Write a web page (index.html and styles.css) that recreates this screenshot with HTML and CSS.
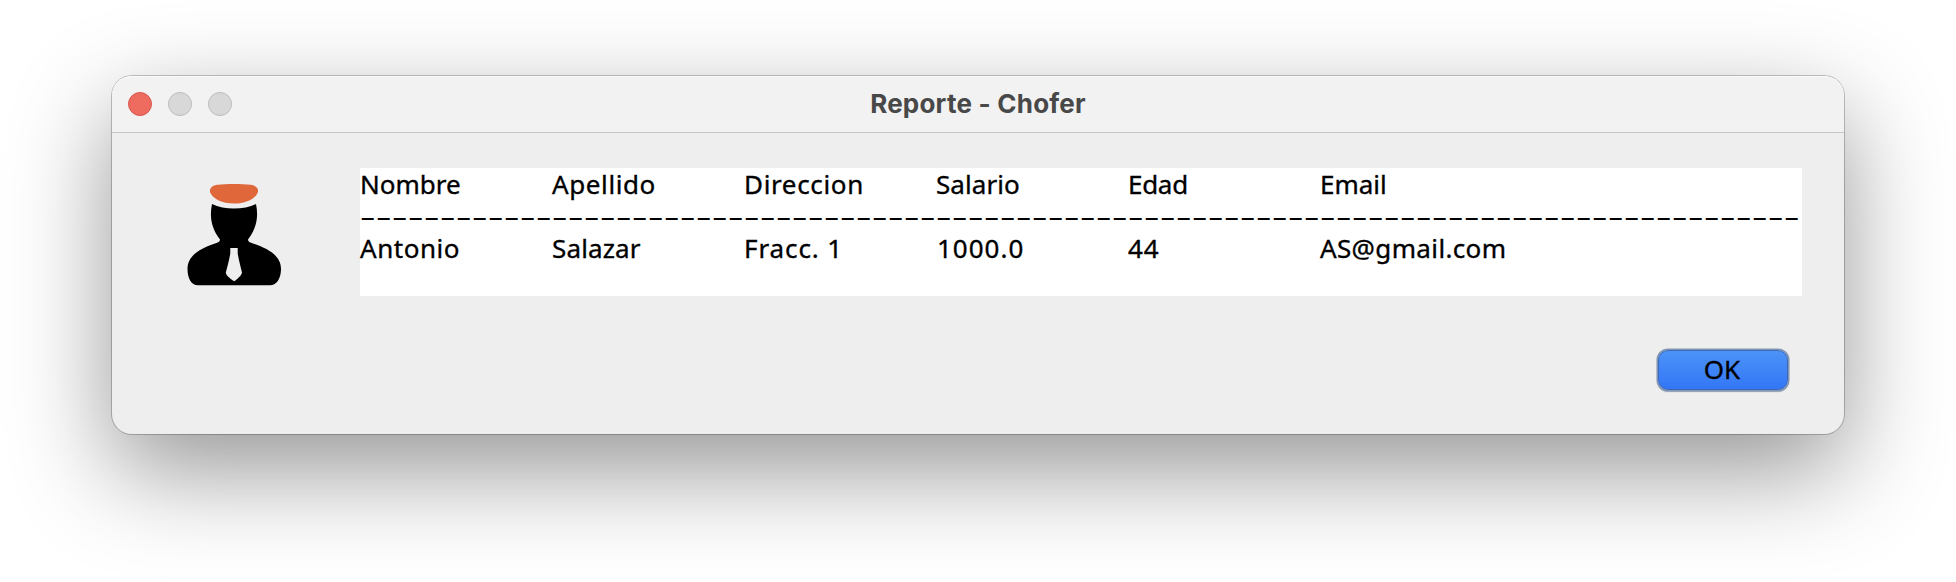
FILE: index.html
```
<!DOCTYPE html>
<html lang="es">
<head>
<meta charset="utf-8">
<title>Reporte - Chofer</title>
<link rel="stylesheet" href="styles.css">
</head>
<body>
<main class="window">
  <header class="titlebar">
    <div class="lights"><i class="light close"></i><i class="light"></i><i class="light"></i></div>
    <h1 class="title">Reporte - Chofer</h1>
  </header>
  <section class="content">
    <svg class="driver" width="96" height="104" viewBox="0 0 96 104">
      <path fill="#e0673a" d="M31.5 .8C40 -.2 56 -.2 64.5 .8C70 1.500 73 4.500 71.8 8.500C69 15 60 19.500 48 19.500S27 15 24.2 8.500C23 4.500 26 1.500 31.5 .8Z"/>
      <path fill="#000" d="M26 20C38 26 58 26 70 20C72.5 32 71 44 62 55.5C62 58 64 58.5 67 59.5C83 65 95 72 95 85C95 94 91 101.300 84 101.300H12C5 101.300 1.500 94 1.500 85C1.500 72 13 65 29 59.500C32 58.500 34 58 34 55.500C25 44 23.500 32 26 20Z"/>
      <path fill="#eee" d="M44.300 64H51.700V69.500Q53 77 56 88.500C55.500 92 51 95 48.300 97.300C45 95 40 92 39.800 88.500Q43 77 44.300 69.500Z"/>
    </svg>
    <div class="report">
      <div class="row"><span class="nombre">Nombre</span><span class="apellido">Apellido</span><span class="direccion">Direccion</span><span class="salario">Salario</span><span class="edad">Edad</span><span class="email">Email</span></div>
      <div class="rule">------------------------------------------------------------------------------------------</div>
      <div class="row"><span class="v-nombre">Antonio</span><span class="v-apellido">Salazar</span><span class="v-direccion">Fracc. 1</span><span class="v-salario">1000.0</span><span class="v-edad">44</span><span class="v-email">AS@gmail.com</span></div>
    </div>
  </section>
  <footer class="actions"><button class="ok">OK</button></footer>
</main>
</body>
</html>
```
FILE: styles.css
```
* { box-sizing: border-box; }
body {
  margin: 0;
  height: 582px;
  padding: 76px 112px 0;
  background: #fff;
  overflow: hidden;
  font: 26px/32px "Noto Sans", sans-serif;
  color: #000;
}
.window {
  height: 358px;
  border-radius: 20px;
  background: #eee;
  box-shadow: 0 0 0 1px rgba(0, 0, 0, .22), 0 36px 100px rgba(0, 0, 0, .42);
}
.titlebar {
  height: 57px;
  display: grid;
  grid-template-columns: 1fr auto 1fr;
  align-items: center;
  padding: 0 16px;
  background: #f2f2f2;
  border-bottom: 1px solid #c6c6c6;
  border-radius: 20px 20px 0 0;
  box-shadow: inset 0 1px #fafafa;
}
.lights { display: flex; gap: 16px; }
.light {
  width: 24px;
  height: 24px;
  border-radius: 50%;
  background: #d8d8d8;
  border: 1px solid #bcbcbc;
}
.close { background: #ed6b5f; border-color: #d9574d; }
.title {
  margin: 0;
  font: 700 26px/32px Inter, sans-serif;
  letter-spacing: .22px;
  color: #484848;
  white-space: nowrap;
}
.content {
  display: flex;
  justify-content: space-between;
  padding: 35px 42px 0 74px;
}
.driver { margin-top: 16px; overflow: visible; }
.report {
  width: 1442px;
  height: 128px;
  background: #fff;
}
.row {
  display: grid;
  grid-template-columns: repeat(5, 192px) 1fr;
  height: 32px;
  white-space: nowrap;
  -webkit-text-stroke: .35px #000;
}
.apellido { letter-spacing: .6px; }
.direccion { letter-spacing: .65px; }
.salario { letter-spacing: .08px; }
.edad { letter-spacing: -.3px; }
.v-nombre { letter-spacing: .55px; }
.v-apellido { letter-spacing: .15px; }
.v-direccion { letter-spacing: .9px; }
.v-salario { letter-spacing: 1px; padding-left: 1px; }
.v-edad { letter-spacing: .8px; }
.v-email { letter-spacing: .36px; }
.rule {
  height: 32px;
  width: 779px;
  white-space: nowrap;
  letter-spacing: .277px;
  transform: scaleX(1.85);
  transform-origin: 0 0;
  -webkit-text-stroke: .15px #000;
}
.actions {
  display: flex;
  justify-content: flex-end;
  padding: 54px 56px 0;
}
.ok {
  width: 130px;
  height: 40px;
  padding: 0 2px 2px 0;
  border: 1px solid #3c68b5;
  border-radius: 10px;
  background: linear-gradient(#4c93f7, #3376f6);
  box-shadow: 0 0 0 1.5px #8096b4, 0 1px 1px 1px rgba(90, 110, 140, .5);
  font: inherit;
  color: #000;
  -webkit-text-stroke: .35px #000;
}
```
